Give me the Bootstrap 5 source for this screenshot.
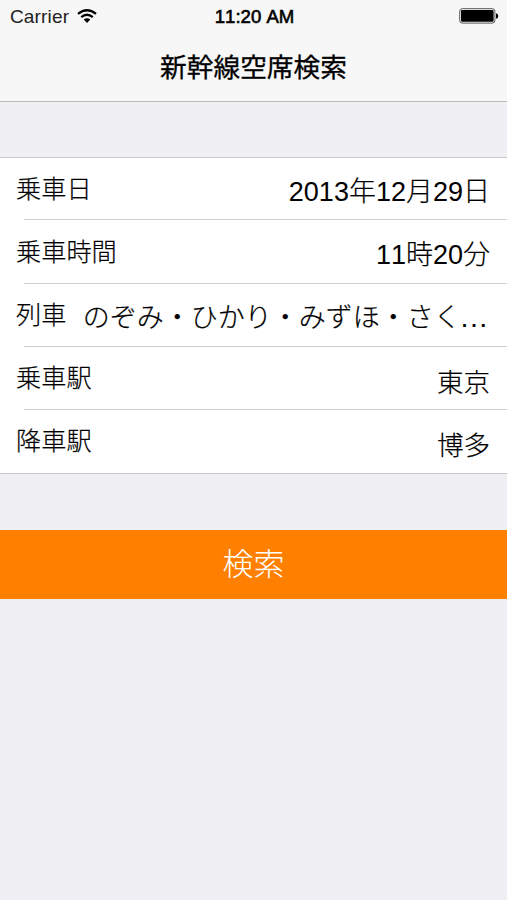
<!DOCTYPE html>
<html lang="ja">
<head>
<meta charset="utf-8">
<meta name="viewport" content="width=device-width, initial-scale=1">
<title>新幹線空席検索</title>
<link href="https://cdn.jsdelivr.net/npm/bootstrap@5.3.0/dist/css/bootstrap.min.css" rel="stylesheet">
<style>
body { background: #efeff4; color: #000; font-family: "Liberation Sans", "Noto Sans CJK JP", sans-serif; overflow: hidden; }
.top-area { height: 102px; background: #f7f7f7; border-bottom: 1px solid #b9b9bc; }
.status-bar { height: 32px; padding: 0 8px 0 10px; font-size: 19px; line-height: 32px; }
.status-side { flex: 1 1 0; }
.carrier { color: #222; letter-spacing: .15px; padding-top: 1px; }
.clock { font-size: 18.6px; font-kerning: none; -webkit-text-stroke: .6px #000; padding-top: 1px; }
.page-title { height: 69px; font-size: 26.7px; line-height: 67px; font-weight: 400; -webkit-text-stroke: .3px #000; font-family: "Noto Sans CJK JP", sans-serif; }
.form-list { margin-top: 55px; border-top: 1px solid #c9c9cd; border-bottom: 1px solid #c8c7cc; background: #fff; }
.form-line { height: 63px; padding: 0 17px 0 16px; position: relative; }
.form-line + .form-line::before { content: ""; position: absolute; left: 24px; right: 0; top: -1px; height: 1px; background: #cfced2; }
.form-line:nth-child(2)::before { top: -2px; }
.field-name { font: 300 25.2px/58px "Noto Sans CJK JP", sans-serif; -webkit-text-stroke: .2px #000; flex: none; }
.field-value { font-size: 27px; line-height: 69px; height: 62px; font-weight: 300; font-kerning: none; white-space: nowrap; -webkit-text-stroke: .2px #000; }
.station { line-height: 72px; font-size: 26.5px; }
.digits { -webkit-text-stroke: 0; }
.dots { letter-spacing: 1.9px; margin-right: 1px; }
.search-btn { height: 68.6px; margin-top: 56px; padding: 0 0 5px; background: #ff8000; color: #fff; font: 300 31px/61px "Noto Sans CJK JP", sans-serif; }
.search-btn:hover { background: #f07800; color: #fff; }
</style>
</head>
<body>
<header class="top-area">
  <div class="status-bar d-flex align-items-center">
    <div class="status-side d-flex align-items-center">
      <span class="carrier">Carrier</span>
      <svg class="ms-2" width="20" height="14" viewBox="0 0 20 14" fill="none" stroke="#000" stroke-width="2.3" aria-hidden="true"><path d="M1 4.8Q10-2.4 19 4.8M4.2 8.1Q10 3.4 15.8 8.1"/><path d="M6.7 10.6Q10 8 13.3 10.6L10 13.9Z" fill="#000" stroke="none"/></svg>
    </div>
    <span class="clock">11:20 AM</span>
    <div class="status-side d-flex justify-content-end">
      <svg width="40" height="16" viewBox="0 0 40 16" aria-hidden="true"><rect x=".7" y=".7" width="35.2" height="14.4" rx="2.6" fill="#f7f7f7" stroke="#555" stroke-width="1"/><rect x="2" y="2" width="32.6" height="11.8" rx="1.2"/><path d="M37 5.2Q39.3 5.6 39.3 8T37 10.8Z"/></svg>
    </div>
  </div>
  <h1 class="page-title text-center m-0">新幹線空席検索</h1>
</header>
<main>
  <div class="form-list">
    <div class="form-line d-flex justify-content-between"><span class="field-name">乗車日</span><span class="field-value"><span class="digits">2013</span>年<span class="digits">12</span>月<span class="digits">29</span>日</span></div>
    <div class="form-line d-flex justify-content-between"><span class="field-name">乗車時間</span><span class="field-value"><span class="digits">11</span>時<span class="digits">20</span>分</span></div>
    <div class="form-line d-flex justify-content-between"><span class="field-name">列車</span><span class="field-value">のぞみ・ひかり・みずほ・さく<span class="dots">...</span></span></div>
    <div class="form-line d-flex justify-content-between"><span class="field-name">乗車駅</span><span class="field-value station">東京</span></div>
    <div class="form-line d-flex justify-content-between"><span class="field-name">降車駅</span><span class="field-value station">博多</span></div>
  </div>
  <button type="button" class="search-btn btn w-100 rounded-0 border-0 d-block">検索</button>
</main>
<script src="https://cdn.jsdelivr.net/npm/bootstrap@5.3.0/dist/js/bootstrap.bundle.min.js"></script>
</body>
</html>
